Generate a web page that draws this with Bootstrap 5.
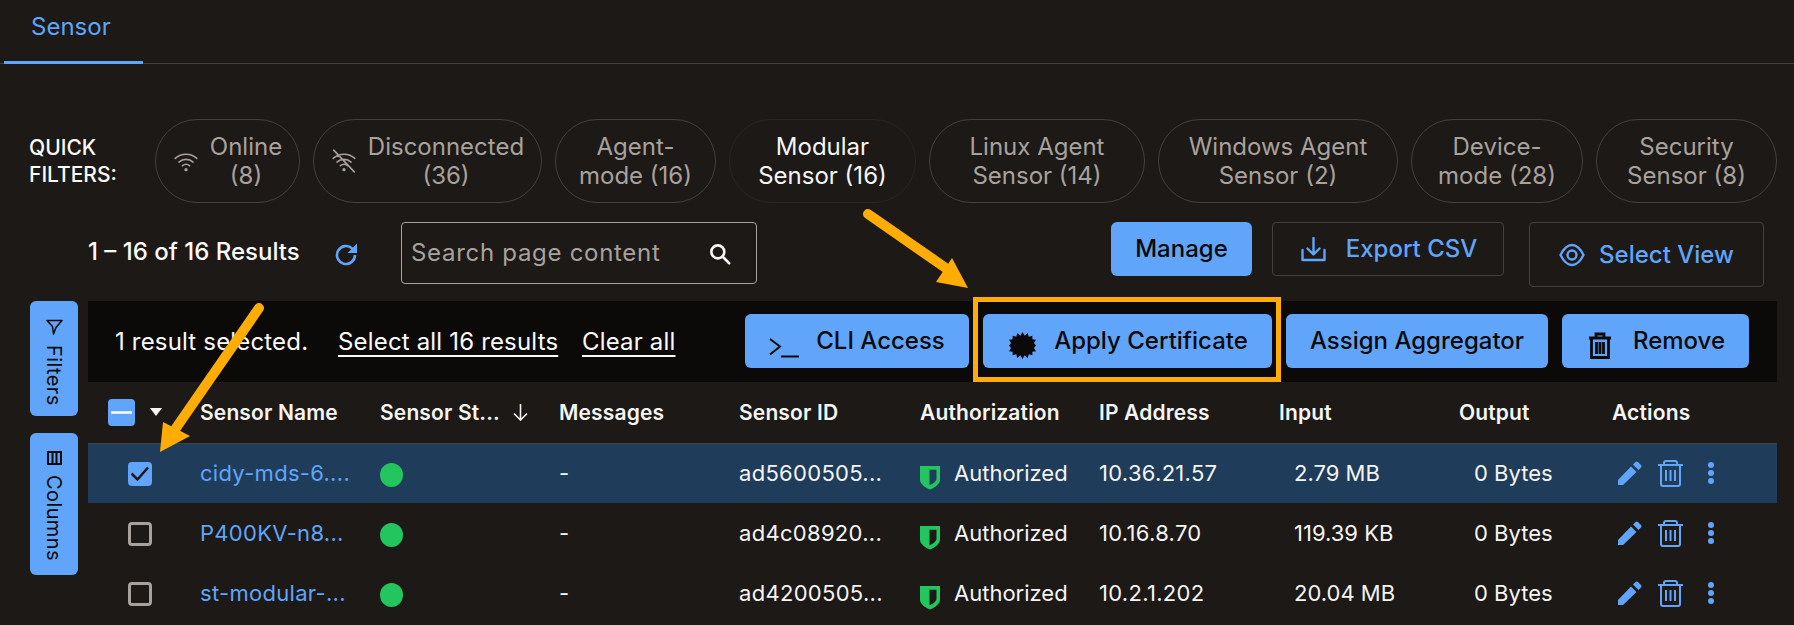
<!DOCTYPE html>
<html lang="en">
<head>
<meta charset="UTF-8">
<title>Sensors</title>
<link rel="stylesheet" href="https://cdn.jsdelivr.net/npm/bootstrap@5.3.0/dist/css/bootstrap.min.css">
<style>
body { background: #1c1917; color: #fafaf9; font-family: Inter, "Liberation Sans", sans-serif; font-size: 24px; overflow: hidden; height: 625px; position: relative; }
.tab-strip { height: 64px; border-bottom: 1px solid #44403c; padding-left: 4px; }
.tab-link { display: block; width: 139px; height: 64px; padding: 9px 0 0 27px; color: #60a5fa; border-bottom: 3px solid #60a5fa; text-decoration: none; }
.filter-row { padding: 55px 0 0 29px; }
.filter-label { width: 126px; font-size: 21px; font-weight: 500; line-height: 27px; padding-top: 15px; }
.pill-grid { display: grid; grid-template-columns: 145px 229px 161px 187px 216px 240px 172px 181px; gap: 13px; }
.qf-pill { height: 84px; border: 1px solid #44403c; border-radius: 42px; color: #a8a29e; line-height: 29px; gap: 11px; }
.qf-pill.picked { color: #f5f5f4; border-color: #292524; }
.qf-pill svg { flex: none; }
.tool-row { padding: 19px 30px 0 88px; height: 98px; }
.result-count { font-weight: 500; margin-top: 12px; width: 246px; white-space: nowrap; }
.refresh-icon { margin-top: 20px; }
.search-box { width: 356px; height: 62px; margin-left: 43px; border: 1px solid #a8a29e; border-radius: 4px; padding: 0 23px 1px 9px; color: #a8a29e; letter-spacing: .7px; }
.search-box svg { margin-top: 2px; }
.btn-sky { background: #60a5fa; color: #0c0a09; border: 0; border-radius: 6px; height: 54px; font-size: 24px; font-weight: 500; padding: 0; display: flex; align-items: center; justify-content: center; }
.btn-sky:hover { background: #60a5fa; color: #0c0a09; }
.btn-line { background: none; color: #60a5fa; border: 1px solid #44403c; border-radius: 4px; font-size: 24px; font-weight: 500; padding: 0; display: flex; align-items: center; justify-content: center; }
.w-manage { width: 141px; }
.w-export { width: 232px; height: 54px; margin-left: 20px; gap: 20px; padding-left: 2px; }
.w-view { width: 235px; height: 65px; margin-left: 25px; gap: 14px; }
.side-rail { width: 48px; gap: 17px; margin-left: 30px; }
.rail-btn { width: 48px; background: #60a5fa; color: #0c0a09; border-radius: 6px; writing-mode: vertical-rl; font-size: 20px; display: flex; align-items: center; gap: 10px; padding-top: 18px; letter-spacing: .4px; }
.rail-filters { height: 115px; }
.rail-columns { height: 142px; }
.main-area { width: 1689px; margin-left: 10px; }
.select-bar { background: #0c0a09; height: 81px; padding: 0 28px 0 27px; letter-spacing: .17px; }
.select-bar a { color: #fafaf9; text-decoration-thickness: 2px; text-underline-offset: 5px; }
.select-note { width: 223px; }
.select-link-a { width: 244px; }
.bar-btns { gap: 14px; letter-spacing: 0; margin-top: -1px; }
.w-cli { width: 224px; gap: 17px; }
.w-apply { width: 289px; gap: 18px; padding-left: 2px; }
.w-assign { width: 262px; }
.w-remove { width: 187px; gap: 21px; padding-left: 2px; }
.icon-low { margin-top: 9px; }
.icon-lower { margin-top: 13px; }
.sensor-table { --bs-table-bg: transparent; --bs-table-color: #f5f5f4; table-layout: fixed; margin: 0; width: 1689px; }
.sensor-table th, .sensor-table td { border: 0; padding: 0; vertical-align: middle; white-space: nowrap; overflow: hidden; }
.sensor-table th { height: 61px; font-size: 21px; font-weight: 600; letter-spacing: .15px; }
.sensor-table td { height: 60px; font-size: 22px; }
.sensor-table thead tr { border-bottom: 1px solid #44403c; }
.sensor-table .row-picked td { background: #1f3d5a; }
.sensor-table a { color: #60a5fa; text-decoration: none; }
.wide-val { letter-spacing: .3px; }
.head-check { padding-left: 20px !important; }
.body-check { padding-left: 40px !important; }
.form-check-input.tick { width: 24px; height: 24px; margin: 5px 0 0; background-color: transparent; background-origin: border-box; border: 3px solid #a8a29e; border-radius: 4px; }
.form-check-input.tick:checked { background-color: #60a5fa; border-color: #60a5fa; background-image: url("data:image/svg+xml,%3Csvg xmlns='http://www.w3.org/2000/svg' viewBox='0 0 24 24'%3E%3Cpath d='M3.500 11.500l6 6L20 5.500' fill='none' stroke='%231c1917' stroke-width='2.500'/%3E%3C/svg%3E"); }
.form-check-input.tick:indeterminate { width: 27px; height: 27px; margin: 0; background-color: #60a5fa; border-color: #60a5fa; background-image: url("data:image/svg+xml,%3Csvg xmlns='http://www.w3.org/2000/svg' viewBox='0 0 27 27'%3E%3Cpath d='M3 13.500h21' stroke='%23fff' stroke-width='2.500'/%3E%3C/svg%3E"); }
.sort-caret { width: 0; height: 0; border-left: 6px solid transparent; border-right: 6px solid transparent; border-top: 8px solid #f5f5f4; margin-left: 15px; }
.sort-head { gap: 12px; }
.status-dot { display: block; width: 23px; height: 24px; border-radius: 50%; background: #22c55e; margin-top: 3px; }
.indent-val { padding-left: 15px !important; }
.act-icons { padding-left: 6px; }
.act-pen { margin-right: 16px; }
.act-bin { margin-right: 24px; }
.auth-cell { gap: 14px; }
.mark-layer { position: absolute; left: 0; top: 0; pointer-events: none; }
</style>
</head>
<body>

<div class="tab-strip">
    <a class="tab-link" href="#">Sensor</a>
</div>

<div class="filter-row d-flex">
    <div class="filter-label">QUICK<br>FILTERS:</div>
    <div class="pill-grid">
        <div class="qf-pill d-flex align-items-center justify-content-center">
            <svg width="26" height="26" viewBox="0 0 24 24" fill="none" stroke="#a8a29e" stroke-width="1.5" stroke-linecap="round"><path d="M2 9.500c5.600-5 14.400-5 20 0M5.500 13c3.700-3.300 9.300-3.300 13 0M8.700 16.300c2-1.600 4.600-1.600 6.600 0"/><circle cx="12" cy="20" r=".8"/></svg>
            <span class="text-center">Online<br>(8)</span>
        </div>
        <div class="qf-pill d-flex align-items-center justify-content-center">
            <svg width="26" height="26" viewBox="0 0 24 24" fill="none" stroke="#a8a29e" stroke-width="1.5" stroke-linecap="round"><path d="M2 9.500c5.600-5 14.400-5 20 0M5.500 13c3.700-3.300 9.300-3.300 13 0M8.700 16.300c2-1.600 4.600-1.600 6.600 0M2.500 2l19 20"/><circle cx="12" cy="20" r=".8"/></svg>
            <span class="text-center">Disconnected<br>(36)</span>
        </div>
        <div class="qf-pill d-flex align-items-center justify-content-center text-center">Agent-<br>mode (16)</div>
        <div class="qf-pill picked d-flex align-items-center justify-content-center text-center">Modular<br>Sensor (16)</div>
        <div class="qf-pill d-flex align-items-center justify-content-center text-center">Linux Agent<br>Sensor (14)</div>
        <div class="qf-pill d-flex align-items-center justify-content-center text-center">Windows Agent<br>Sensor (2)</div>
        <div class="qf-pill d-flex align-items-center justify-content-center text-center">Device-<br>mode (28)</div>
        <div class="qf-pill d-flex align-items-center justify-content-center text-center">Security<br>Sensor (8)</div>
    </div>
</div>

<div class="tool-row d-flex align-items-start">
    <div class="result-count">1 – 16 of 16 Results</div>
    <svg class="refresh-icon" width="24" height="24" viewBox="0 0 24 24" fill="none" stroke="#60a5fa" stroke-width="2.600"><path d="M21 13a9 9 0 1 1-2.700-6.400L21 9"/><path d="M23 1.500V11h-9.500" fill="#60a5fa" stroke="none"/></svg>
    <div class="search-box d-flex align-items-center justify-content-between">
        <span>Search page content</span>
        <svg width="26" height="26" viewBox="0 0 24 24" fill="none" stroke="#fafaf9" stroke-width="2.400" stroke-linecap="round"><circle cx="10" cy="10" r="6"/><path d="M14.500 14.500l6 6"/></svg>
    </div>
    <div class="ms-auto d-flex align-items-start">
        <button class="btn btn-sky w-manage">Manage</button>
        <button class="btn btn-line w-export">
            <svg width="25" height="25" viewBox="0 0 25 25" fill="none" stroke="#60a5fa" stroke-width="2.400" stroke-linecap="round" stroke-linejoin="round"><path d="M12.500 1v16M6.500 11.500l6 6 6-6M1.500 13v10h22V13"/></svg>
            Export CSV
        </button>
        <button class="btn btn-line w-view">
            <svg width="26" height="24" viewBox="0 0 26 24" fill="none" stroke="#60a5fa" stroke-width="2.400"><path d="M1.500 12c3-6 7-10 11.500-10s8.500 4 11.500 10c-3 6-7 10-11.500 10S4.500 18 1.500 12z"/><circle cx="13" cy="12" r="4.500"/></svg>
            Select View
        </button>
    </div>
</div>

<div class="d-flex">
    <div class="side-rail d-flex flex-column">
        <div class="rail-btn rail-filters">
            <svg width="17" height="16" viewBox="0 0 17 16" fill="none" stroke="#0c0a09" stroke-width="1.500" stroke-linejoin="round"><path d="M1 1.500h15L10 8.500 7.500 15 6.500 7.500z"/></svg>
            Filters
        </div>
        <div class="rail-btn rail-columns">
            <svg width="15" height="14" viewBox="0 0 15 14" fill="none" stroke="#0c0a09" stroke-width="2"><path d="M1 1h13v12H1zM5.500 1v12M9.500 1v12"/></svg>
            Columns
        </div>
    </div>

    <div class="main-area">
        <div class="select-bar d-flex align-items-center">
            <span class="select-note">1 result selected.</span>
            <a class="select-link-a" href="#">Select all 16 results</a>
            <a href="#">Clear all</a>
            <div class="ms-auto d-flex bar-btns">
                <button class="btn btn-sky w-cli">
                    <svg class="icon-lower" width="30" height="20" viewBox="0 0 30 20" fill="none" stroke="#0c0a09" stroke-width="2"><path d="M1 1l10 7.500-10 8M12 18.500h18"/></svg>
                    CLI Access
                </button>
                <button class="btn btn-sky w-apply">
                    <svg class="icon-low" width="27" height="27" viewBox="0 0 26 26" fill="#0c0a09"><polygon points="13,0 15,3.500 18,1 19,4.500 22.500,3.500 22.500,7 26,7.500 24,10.500 26,13 24,15.500 26,18.500 22.500,19 22.500,22.500 19,21.500 18,25 15,22.500 13,26 11,22.500 8,25 7,21.500 3.500,22.500 3.500,19 0,18.500 2,15.500 0,13 2,10.500 0,7.500 3.500,7 3.500,3.500 7,4.500 8,1 11,3.500"/></svg>
                    Apply Certificate
                </button>
                <button class="btn btn-sky w-assign">Assign Aggregator</button>
                <button class="btn btn-sky w-remove">
                    <svg class="icon-low" width="24" height="27" viewBox="0 0 24 27" fill="none" stroke="#0c0a09" stroke-width="2.800"><path d="M1 6h22M8 6V2h8v4M3.500 6v19.500h17V6M8.500 10v12M12 10v12M15.500 10v12"/></svg>
                    Remove
                </button>
            </div>
        </div>

        <table class="table sensor-table">
            <colgroup>
                <col style="width:112px"><col style="width:180px"><col style="width:179px"><col style="width:180px"><col style="width:181px"><col style="width:179px"><col style="width:180px"><col style="width:180px"><col style="width:153px"><col style="width:165px">
            </colgroup>
            <thead>
                <tr>
                    <th class="head-check"><div class="d-flex align-items-center"><input class="form-check-input tick" type="checkbox" id="checkAll"><span class="sort-caret"></span></div></th>
                    <th>Sensor Name</th>
                    <th><div class="d-flex align-items-center sort-head">Sensor St...
                        <svg width="17" height="18" viewBox="0 0 17 18" fill="none" stroke="#f5f5f4" stroke-width="1.600"><path d="M8.500 1v16M2 10.500l6.500 6.500 6.500-6.500"/></svg></div></th>
                    <th>Messages</th>
                    <th>Sensor ID</th>
                    <th>Authorization</th>
                    <th>IP Address</th>
                    <th>Input</th>
                    <th>Output</th>
                    <th>Actions</th>
                </tr>
            </thead>
            <tbody id="rows"></tbody>
        </table>
    </div>
</div>

<svg class="mark-layer" width="1794" height="625" viewBox="0 0 1794 625">
    <rect x="975.500" y="299.500" width="303" height="80" fill="none" stroke="#ffad05" stroke-width="5"/>
    <path d="M868 214L950 271" stroke="#ffad05" stroke-width="10" stroke-linecap="round" fill="none"/>
    <polygon points="968,288 936,282 952,258" fill="#ffad05"/>
    <path d="M259 308L176 428" stroke="#ffad05" stroke-width="10" stroke-linecap="round" fill="none"/>
    <polygon points="160,452 163,422 190,436" fill="#ffad05"/>
</svg>

<script src="https://cdn.jsdelivr.net/npm/bootstrap@5.3.0/dist/js/bootstrap.bundle.min.js"></script>
<script>
    document.getElementById('checkAll').indeterminate = true;

    const sensors = [
        { name: 'cidy-mds-6....', id: 'ad5600505...', ip: '10.36.21.57', input: '2.79 MB', picked: true },
        { name: 'P400KV-n8...', id: 'ad4c08920...', ip: '10.16.8.70', input: '119.39 KB', picked: false },
        { name: 'st-modular-...', id: 'ad4200505...', ip: '10.2.1.202', input: '20.04 MB', picked: false }
    ];

    document.getElementById('rows').innerHTML = sensors.map(s => `
        <tr class="${s.picked ? 'row-picked' : ''}">
            <td class="body-check"><input class="form-check-input tick" type="checkbox" ${s.picked ? 'checked' : ''}></td>
            <td class="wide-val"><a href="#">${s.name}</a></td>
            <td><span class="status-dot"></span></td>
            <td>-</td>
            <td class="wide-val">${s.id}</td>
            <td><div class="d-flex align-items-center auth-cell">
                <svg class="icon-low" width="20" height="24" viewBox="0 0 20 24"><path fill-rule="evenodd" fill="#22c55e" d="M0 0h20v13.500C20 18 15 21.500 10 23.500 5 21.500 0 18 0 13.500zM9.500 3.700h7v9c0 2.500-3.500 5-7 6.500z"/></svg>
                Authorized</div></td>
            <td class="wide-val">${s.ip}</td>
            <td class="indent-val">${s.input}</td>
            <td class="indent-val">0 Bytes</td>
            <td><div class="d-flex align-items-center act-icons">
                <svg class="act-pen" width="24" height="24" viewBox="0 0 24 24" fill="#60a5fa"><path d="M0 24v-5L13 5.500l5.500 5.500L5 24zM15 3.500l2.500-2.500c.7-.7 1.800-.7 2.500 0l3 3c.7.7.7 1.800 0 2.500L20.500 9z"/></svg>
                <svg class="act-bin" width="25" height="27" viewBox="0 0 25 27" fill="none" stroke="#60a5fa" stroke-width="2"><path d="M0 5h25M6 5V3c0-1 1-2 2-2h9c1 0 2 1 2 2v2M3 5v19c0 1 1 2 2 2h15c1 0 2-1 2-2V5M8 10v11M12.500 10v11M17 10v11"/></svg>
                <svg width="8" height="24" viewBox="0 0 8 24" fill="#60a5fa"><circle cx="4" cy="4" r="3"/><circle cx="4" cy="12" r="3"/><circle cx="4" cy="20" r="3"/></svg>
            </div></td>
        </tr>`).join('');
</script>
</body>
</html>
